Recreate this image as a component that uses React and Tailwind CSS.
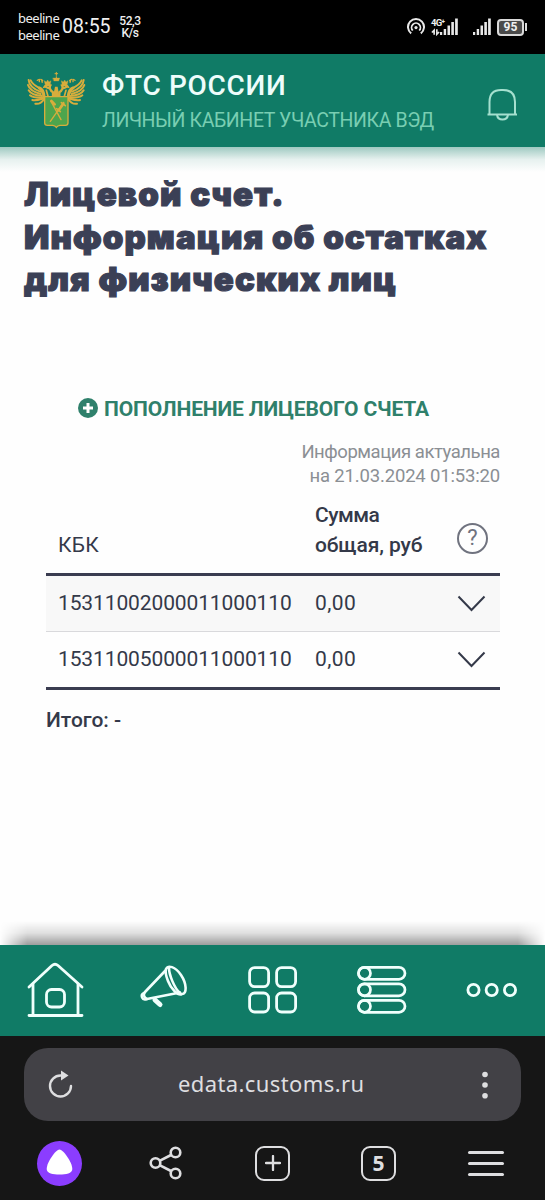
import { clsx } from 'clsx';

const rows = [
  { kbk: '15311002000011000110', sum: '0,00' },
  { kbk: '15311005000011000110', sum: '0,00' },
];

function SignalBars({ className }) {
  return (
    <svg className={className} viewBox="0 0 18 18" fill="#e8e8e8">
      <rect x="0" y="14" width="2.2" height="3" />
      <rect x="3.7" y="11" width="2.4" height="6" />
      <rect x="7.5" y="7.5" width="2.5" height="9.5" />
      <rect x="11.3" y="4" width="2.6" height="13" />
      <rect x="15.1" y="0.5" width="2.7" height="16.5" />
    </svg>
  );
}

function StatusBar() {
  return (
    <div className="flex h-[54px] items-center bg-black pl-[18px] pr-[18px] text-[#f0f0f0] font-['Roboto',sans-serif]">
      <div className="w-[44px] text-[13px] leading-[17px] font-['Noto_Sans',sans-serif] tracking-[-0.5px] whitespace-nowrap">
        <div>beeline</div>
        <div>beeline</div>
      </div>
      <div className="w-[50px] text-[19.5px] leading-none whitespace-nowrap">08:55</div>
      <div className="ml-[6px] w-[24px] text-center text-[12px] leading-[12px] font-medium tracking-[-0.4px] whitespace-nowrap">
        <div>52,3</div>
        <div>K/s</div>
      </div>
      <svg className="ml-auto h-[18px] w-[18px]" viewBox="0 0 18 18" fill="none" stroke="#e8e8e8" strokeWidth="2">
        <path d="M4.2 15.4A8 8 0 1 1 13.8 15.4" />
        <path d="M5.8 12.500A4.400 4.400 0 1 1 12.200 12.500" strokeWidth="1.800" />
        <circle cx="9" cy="9.600" r="1.600" fill="#e8e8e8" stroke="none" />
      </svg>
      <div className="ml-[6px] flex h-[18px] w-[27px]">
        <div className="w-[9px] shrink-0">
          <div className="h-[10px] w-[14px] text-[9.5px] leading-[9px] font-bold tracking-[-0.8px]">4G⁺</div>
          <svg className="h-[8px] w-[9px]" viewBox="0 0 10 8" fill="none" stroke="#e8e8e8" strokeWidth="1.800">
            <path d="M3.500 7V2L1 4.500M6.500 1v5.500L9 4" />
          </svg>
        </div>
        <SignalBars className="h-[18px] w-[18px] shrink-0" />
      </div>
      <SignalBars className="ml-[15px] h-[18px] w-[18px]" />
      <div className="ml-[6px] flex items-center">
        <div className="flex h-[17px] w-[27px] items-center justify-center rounded-[4px] border-2 border-[#dadada] bg-[#4a4a4a] text-[12px] font-bold leading-none">
          95
        </div>
        <div className="ml-px h-[8px] w-[2px] bg-[#dadada]" />
      </div>
    </div>
  );
}

function Emblem() {
  return (
    <svg className="h-[70px] w-[70px]" viewBox="0 0 210 210" fill="none" stroke="#d8ad3c" strokeLinecap="round">
      {/* wings, drawn once and mirrored */}
      {[1, -1].map((dir) => (
        <g key={dir} transform={dir === 1 ? undefined : 'translate(217 0) scale(-1 1)'}>
          <g strokeWidth="6">
            <path d="M26 45C27 63 43 73 61 80" />
            <path d="M24 60C29 76 43 82 62 87" />
            <path d="M26 76C33 88 45 91 66 93" />
            <path d="M30 91C40 99 51 99 69 98" />
            <path d="M37 105C47 108 58 104 72 100" />
            <path d="M46 116C56 118 66 112 73 101" />
            <path d="M32 46C37 57 48 64 61 71L72 91" />
          </g>
          <path d="M58 69Q70 73 72 94" strokeWidth="9" />
          <path d="M99 94V82C90 77 87 67 91 61C81 57 76 61 74 65C80 64 79 69 86 69" strokeWidth="7" />
          <path d="M75 57l-2-10 6 4 4-6 4 6 6-4-2 10z" fill="#d8ad3c" strokeWidth="1" />
          <path d="M68 47C64 41 55 42 51 47M58 43v7M65 45l2 8" strokeWidth="4" strokeDasharray="7 4" />
          <path d="M79 76L84 94" strokeWidth="5" />
        </g>
      ))}
      <path d="M99 39h20l-3 9h-14z" fill="#d8ad3c" strokeWidth="1" />
      <path d="M109 22v9M105 26h8M109 35v6" strokeWidth="3" />
      <path d="M105 65h8l5 30H99z" fill="#d8ad3c" stroke="none" />
      <path
        d="M74 95H144V174Q144 181 136 181H120Q113 182 109 187Q105 182 98 181H82Q74 181 74 174Z"
        fill="#4da54d"
        strokeWidth="4"
      />
      <path d="M93 109L123 164M131 112L91 169" strokeWidth="4" />
      <path d="M94 108l10 10M130 116L116 136" strokeWidth="8" />
      <path d="M124 113l12 9M110 131l11 9" strokeWidth="5" />
    </svg>
  );
}

function Header() {
  return (
    <header className="relative z-10 flex h-[93px] bg-[#107b66] pl-[20px] font-['Roboto',sans-serif]">
      <div className="pt-[11px]">
        <Emblem />
      </div>
      <div className="ml-[12px] whitespace-nowrap">
        <div className="mt-[15px] text-[28px] leading-[34px] font-medium tracking-[0.7px] text-[#eefdfb]">ФТС РОССИИ</div>
        <div className="mt-[5px] text-[19.5px] leading-[26px] tracking-[-0.4px] text-[#79ceb2]">ЛИЧНЫЙ КАБИНЕТ УЧАСТНИКА ВЭД</div>
      </div>
      <svg className="mt-[33px] mr-[26px] ml-auto h-[34px] w-[34px]" viewBox="0 0 34 34" fill="none" stroke="#a5e0cf" strokeWidth="2">
        <path d="M4.500 27V15C4.500 6 9 3 16 3h2C26 3 30 7 30 15V27" />
        <path d="M2.500 27.500h29.500" />
        <path d="M12 28c1 6 10 6 11 0" />
      </svg>
      <div className="absolute top-full left-0 h-[25px] w-full bg-linear-to-b from-[#107b66]/40 via-[#107b66]/10 to-transparent" />
    </header>
  );
}

function AccountTable() {
  return (
    <div className="mt-[12px] text-[21px] text-[#343949]">
      <div className="flex h-[76px] items-end border-b-3 border-[#3a3c50] pb-[13px] pl-[12px] leading-[30px] font-medium">
        <div className="w-[257px] font-normal tracking-[0.2px]">КБК</div>
        <div className="w-[142px] whitespace-nowrap">
          <span className="tracking-[-0.5px]">Сумма</span>
          <br />
          <span className="tracking-[-0.1px]">общая, руб</span>
        </div>
        <div className="mb-[6px] flex h-[31px] w-[31px] items-center justify-center rounded-full border-2 border-[#70737f] text-[22px] leading-none font-normal text-[#70737f]">
          ?
        </div>
      </div>
      {rows.map((row, i) => (
        <div
          key={row.kbk}
          className={clsx(
            'flex items-center pl-[12px] leading-[30px]',
            i === 0 ? 'h-[56px] border-b border-[#d9d9dc] bg-[#f8f8f8]' : 'h-[55px]'
          )}
        >
          <div className="w-[257px] tracking-[-0.12px]">{row.kbk}</div>
          <div className="w-[142px] tracking-[0.4px]">{row.sum}</div>
          <svg className="h-[18px] w-[29px]" viewBox="0 0 29 18" fill="none" stroke="#343949" strokeWidth="2">
            <path d="M1.500 2.500L14.500 16L27.500 2.500" />
          </svg>
        </div>
      ))}
      <div className="h-[3px] bg-[#3a3c50]" />
      <div className="mt-[15px] leading-[30px] font-medium">Итого: -</div>
    </div>
  );
}

function BottomNav() {
  return (
    <nav className="relative flex h-[91px] bg-[#107b66] text-[#f0fffc]">
      <div className="absolute bottom-full left-0 h-[24px] w-full bg-linear-to-t from-black/38 via-black/12 to-transparent mask-x-from-95% mask-x-to-100%" />
      <svg className="mt-[16px] ml-[26px] h-[58px] w-[58px]" viewBox="0 0 58 58" fill="none" stroke="currentColor" strokeWidth="2.8" strokeLinecap="round" strokeLinejoin="round">
        <path d="M3 26L26 4.500Q29 2 32 4.500L56 26" />
        <path d="M7 23v31M52 23v31M3 54.500h53" />
        <rect x="20.500" y="28.500" width="18" height="17.500" rx="5" />
      </svg>
      <svg className="mt-[18px] ml-[54px] h-[50px] w-[52px]" viewBox="0 0 52 50" fill="none" stroke="currentColor" strokeWidth="2.6" strokeLinecap="round" strokeLinejoin="round">
        <path d="M28 6C30 2 37 3 43 12C49 21 49 31 44 31C40 33 33 26 30 18C28 13 27 9 28 6Z" />
        <path d="M31 5C31 11 36 25 42 30" />
        <path d="M27 8L7 29Q4 33 9 36L42 29.500" />
        <path d="M6 30C2 32 4 38 9 36" />
        <path d="M17 37L22 41.500" strokeWidth="5" />
      </svg>
      <svg className="mt-[20px] ml-[57px] h-[50px] w-[51px]" viewBox="0 0 51 50" fill="none" stroke="currentColor" strokeWidth="2.8">
        <rect x="2.600" y="2.600" width="19" height="19" rx="5" />
        <rect x="29.600" y="2.600" width="19" height="19" rx="5" />
        <rect x="2.600" y="28" width="19" height="19" rx="5" />
        <rect x="29.600" y="28" width="19" height="19" rx="5" />
      </svg>
      <svg className="mt-[20px] ml-[58px] h-[50px] w-[52px]" viewBox="0 0 52 50" fill="none" stroke="currentColor" strokeWidth="2.700">
        {[2.3, 18.8, 35.3].map((y) => (
          <g key={y}>
            <rect x="2.500" y={y} width="46.500" height="12" rx="6" />
            <circle cx="8.500" cy={y + 6} r="6" />
          </g>
        ))}
      </svg>
      <svg className="mt-[36px] ml-[58px] h-[18px] w-[52px]" viewBox="0 0 52 18" fill="none" stroke="currentColor" strokeWidth="2.800">
        <circle cx="7.500" cy="9" r="5.600" />
        <circle cx="25.700" cy="9" r="5.600" />
        <circle cx="44" cy="9" r="5.600" />
      </svg>
    </nav>
  );
}

function BrowserBar() {
  return (
    <div className="h-[164px] bg-[#161616] px-[24px] pt-[12px] text-[#dedee0]">
      <div className="flex h-[73px] items-center rounded-[24px] bg-[#424146]">
        <svg className="ml-[23px] h-[30px] w-[28px]" viewBox="0 0 28 30" fill="none" stroke="currentColor" strokeWidth="2.400" strokeLinecap="round">
          <path d="M16 5.500H13.500A10.500 10.500 0 1 0 24 16" />
          <path d="M14 0.500L21.500 5.500L14 10.500Z" fill="currentColor" stroke="none" />
        </svg>
        <div className="mb-[3px] ml-[103px] text-[22px] leading-[30px] tracking-[0.4px] font-['Noto_Sans',sans-serif] whitespace-nowrap">edata.customs.ru</div>
        <svg className="mr-[33px] ml-auto h-[28px] w-[6px]" viewBox="0 0 6 28" fill="currentColor">
          <circle cx="3" cy="3.500" r="2.800" />
          <circle cx="3" cy="14" r="2.800" />
          <circle cx="3" cy="24.700" r="2.800" />
        </svg>
      </div>
      <div className="mt-[19px] flex h-[46px] items-center pl-[13px]">
        <div className="flex h-[45px] w-[45px] items-center justify-center rounded-full bg-[#8b3dff]">
          <svg className="mb-[3px] h-[26px] w-[27px]" viewBox="0 0 27 26" fill="white">
            <path d="M13.500 0.500C17 0.500 26.300 13 26.300 20C26.300 24.500 20 25.500 13.500 25.500S0.700 24.500 0.700 20C0.700 13 10 0.500 13.500 0.500Z" />
          </svg>
        </div>
        <svg className="ml-[66px] h-[36px] w-[36px]" viewBox="0 0 36 36" fill="none" stroke="currentColor" strokeWidth="2.600">
          <circle cx="7.500" cy="18" r="4.800" />
          <circle cx="27.500" cy="7.500" r="4.800" />
          <circle cx="27.500" cy="28.500" r="4.800" />
          <path d="M12 15.700L23 10M12 20.300L23 26" />
        </svg>
        <div className="ml-[71px] flex h-[35px] w-[35px] items-center justify-center rounded-[9px] border-[2.500px] border-current">
          <svg className="h-[16px] w-[16px]" viewBox="0 0 16 16" stroke="currentColor" strokeWidth="2.300" strokeLinecap="round">
            <path d="M8 1v14M1 8h14" />
          </svg>
        </div>
        <div className="ml-[71px] flex h-[35px] w-[35px] items-center justify-center rounded-[9px] border-[2.500px] border-current text-[21px] leading-none font-bold font-['Noto_Sans',sans-serif]">
          5
        </div>
        <div className="ml-[72px] flex w-[36px] flex-col gap-[8px]">
          <div className="h-[3px] rounded-full bg-current" />
          <div className="h-[3px] rounded-full bg-current" />
          <div className="h-[3px] rounded-full bg-current" />
        </div>
      </div>
    </div>
  );
}

export default function App() {
  return (
    <div className="flex h-[1200px] w-[545px] flex-col overflow-hidden bg-[#fefefe] font-['Roboto',sans-serif]">
      <StatusBar />
      <Header />
      <main className="flex-1">
        <h1 className="mt-[26px] ml-[24px] text-[33px] leading-[42.5px] font-black tracking-[1.08px] whitespace-nowrap text-[#3b4056] font-['Inter',sans-serif] [-webkit-text-stroke:1.2px_#3b4056]">
          Лицевой счет.
          <br />
          Информация об остатках
          <br />
          для физических лиц
        </h1>
        <div className="mt-[93px] ml-[78px] flex items-center text-[#2f806b]">
          <svg className="mb-[2px] h-[20px] w-[20px]" viewBox="0 0 20 20">
            <circle cx="10" cy="10" r="10" fill="currentColor" />
            <path d="M10 5v10M5 10h10" stroke="white" strokeWidth="3" />
          </svg>
          <span className="ml-[6px] text-[21px] leading-[30px] font-bold tracking-[-0.14px] whitespace-nowrap">ПОПОЛНЕНИЕ ЛИЦЕВОГО СЧЕТА</span>
        </div>
        <div className="mr-[45px] ml-[46px]">
          <div className="mt-[16px] text-right text-[18.5px] leading-[24px] text-[#8b8f94]">
            <span className="tracking-[-0.45px]">Информация актуальна</span>
            <br />
            <span className="tracking-[-0.17px]">на 21.03.2024 01:53:20</span>
          </div>
          <AccountTable />
        </div>
      </main>
      <BottomNav />
      <BrowserBar />
    </div>
  );
}
